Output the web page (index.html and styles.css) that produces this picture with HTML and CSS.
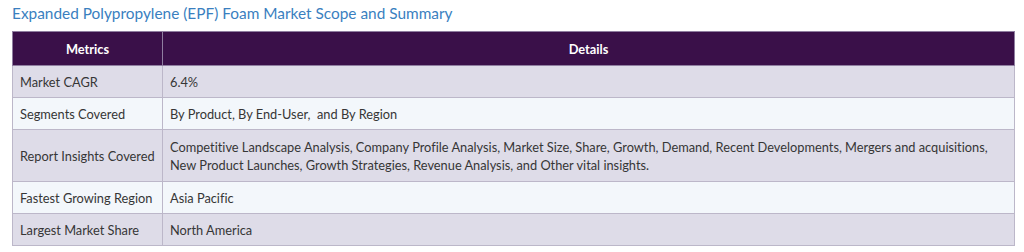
FILE: index.html
```html
<!DOCTYPE html>
<html lang="en">
<head>
<meta charset="utf-8">
<title>EPF Foam Market Scope</title>
<link rel="stylesheet" href="styles.css">
</head>
<body>
<h2 class="title">Expanded Polypropylene (EPF) Foam Market Scope and Summary</h2>
<table class="scope">
  <thead>
    <tr><th class="col-metric">Metrics</th><th>Details</th></tr>
  </thead>
  <tbody>
    <tr class="odd"><td class="metric">Market CAGR</td><td>6.4%</td></tr>
    <tr class="even"><td class="metric">Segments Covered</td><td>By Product, By End-User,&nbsp; and By Region</td></tr>
    <tr class="odd tall"><td class="metric">Report Insights Covered</td><td>Competitive Landscape Analysis, Company Profile Analysis, Market Size, Share, Growth, Demand, Recent Developments, Mergers and acquisitions, New Product Launches, Growth Strategies, Revenue Analysis, and Other vital insights.</td></tr>
    <tr class="even"><td class="metric">Fastest Growing Region</td><td>Asia Pacific</td></tr>
    <tr class="odd"><td class="metric">Largest Market Share</td><td>North America</td></tr>
  </tbody>
</table>
</body>
</html>
```
FILE: styles.css
```css
html, body {
  margin: 0;
  padding: 0;
  background: #ffffff;
}
body {
  font-family: Lato, "Open Sans", "Liberation Sans", sans-serif;
  font-variant-ligatures: none;
  color: #363636;
}
.title {
  margin: 0;
  padding: 3px 0 0 12px;
  height: 26px;
  box-sizing: border-box;
  font-weight: 400;
  font-size: 15.4px;
  line-height: 20px;
  color: #3a7fbf;
}
.scope {
  margin: 5px 0 0 12px;
  width: 1003px;
  border-collapse: collapse;
  font-size: 12.8px;
  line-height: 18px;
}
.scope th {
  background: #3a1049;
  color: #ffffff;
  font-weight: 700;
  height: 33px;
  padding: 0 8px;
  text-align: center;
  border: 1px solid #8f7ea0;
}
.scope th.col-metric {
  width: 133px;
}
.scope td {
  height: 31px;
  padding: 0 7px;
  border: 1px solid #bcb7c9;
  vertical-align: middle;
}
.scope td.metric {
  white-space: nowrap;
}
.scope tr.tall td {
  height: 51px;
}
.odd td {
  background: #dedce8;
}
.even td {
  background: #f3f7fb;
}
```
